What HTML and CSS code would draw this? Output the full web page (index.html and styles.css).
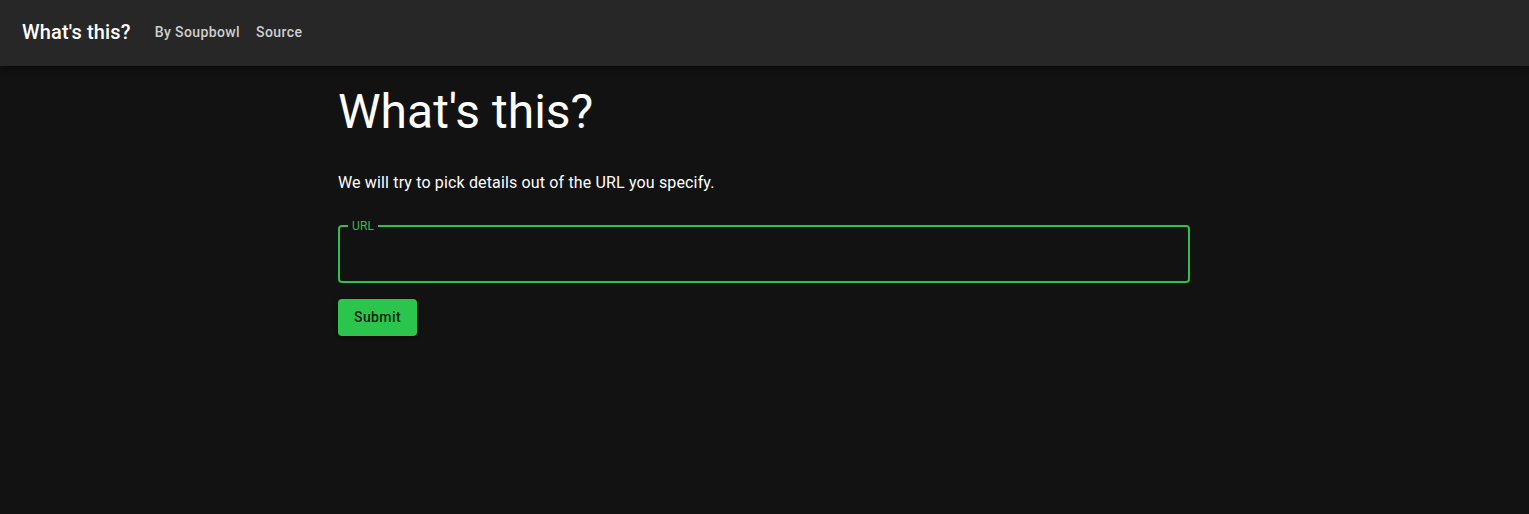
FILE: index.html
```html
<!DOCTYPE html>
<html lang="en">
<head>
<meta charset="utf-8">
<title>What's this?</title>
<link rel="stylesheet" href="styles.css">
</head>
<body>
<header class="appbar">
  <div class="toolbar">
    <h6 class="brand">What's this?</h6>
    <nav class="nav">
      <a class="nav-link" href="#">By Soupbowl</a>
      <a class="nav-link" href="#">Source</a>
    </nav>
  </div>
</header>
<main class="container">
  <h3 class="title">What's this?</h3>
  <p class="lead">We will try to pick details out of the URL you specify.</p>
  <form class="form">
    <fieldset class="field">
      <legend class="field-label">URL</legend>
      <input class="field-input" type="text" aria-label="URL">
    </fieldset>
    <button class="submit" type="button">Submit</button>
  </form>
</main>
</body>
</html>
```
FILE: styles.css
```css
* { box-sizing: border-box; }
html, body { margin: 0; padding: 0; }
body {
  background: #121212;
  color: #fff;
  font-family: Roboto, "Liberation Sans", sans-serif;
  min-height: 100vh;
}
.appbar {
  background: #272727;
  box-shadow: 0 2px 4px -1px rgba(0,0,0,0.2), 0 4px 5px 0 rgba(0,0,0,0.14), 0 1px 10px 0 rgba(0,0,0,0.12);
  position: relative;
  z-index: 1;
}
.toolbar {
  display: flex;
  align-items: center;
  min-height: 66px;
  padding: 0 24px 2px 22px;
}
.brand {
  margin: 0 16px 0 0;
  font-size: 20px;
  font-weight: 500;
  line-height: 1.6;
  letter-spacing: 0.0075em;
}
.nav { display: flex; }
.nav-link {
  color: rgba(255,255,255,0.78);
  text-decoration: none;
  font-size: 14px;
  font-weight: 500;
  line-height: 1.75;
  letter-spacing: 0.02857em;
  padding: 6px 8px;
}
.container {
  max-width: 900px;
  margin: 0 auto;
  padding: 18px 24.5px 0 23.5px;
}
.title {
  margin: 0;
  font-size: 48px;
  font-weight: 400;
  line-height: 1.167;
}
.lead {
  margin: 31px 0 0;
  font-size: 16px;
  line-height: 1.5;
  letter-spacing: 0.00938em;
}
.form {
  display: flex;
  flex-direction: column;
  align-items: flex-start;
  margin-top: 25px;
}
.field {
  width: 100%;
  margin: 0;
  padding: 0 8px;
  height: 63px;
  border: 2px solid #2fbf4b;
  border-radius: 4px;
  display: block;
}
.field-label {
  color: #2fbf4b;
  font-size: 12px;
  line-height: 1;
  padding: 0 4px;
  margin-left: 0;
  letter-spacing: 0.00938em;
}
.field-input {
  width: 100%;
  background: transparent;
  border: 0;
  outline: none;
  color: #fff;
  font: inherit;
  font-size: 16px;
  height: 44px;
  padding: 0 4px;
}
.submit {
  margin-top: 16px;
  background: #2bc54e;
  color: rgba(0,0,0,0.87);
  border: 0;
  border-radius: 4px;
  padding: 6px 16px;
  font-family: inherit;
  font-size: 14px;
  font-weight: 500;
  line-height: 1.75;
  letter-spacing: 0.02857em;
  box-shadow: 0 3px 1px -2px rgba(0,0,0,0.2), 0 2px 2px 0 rgba(0,0,0,0.14), 0 1px 5px 0 rgba(0,0,0,0.12);
  cursor: pointer;
}
```
